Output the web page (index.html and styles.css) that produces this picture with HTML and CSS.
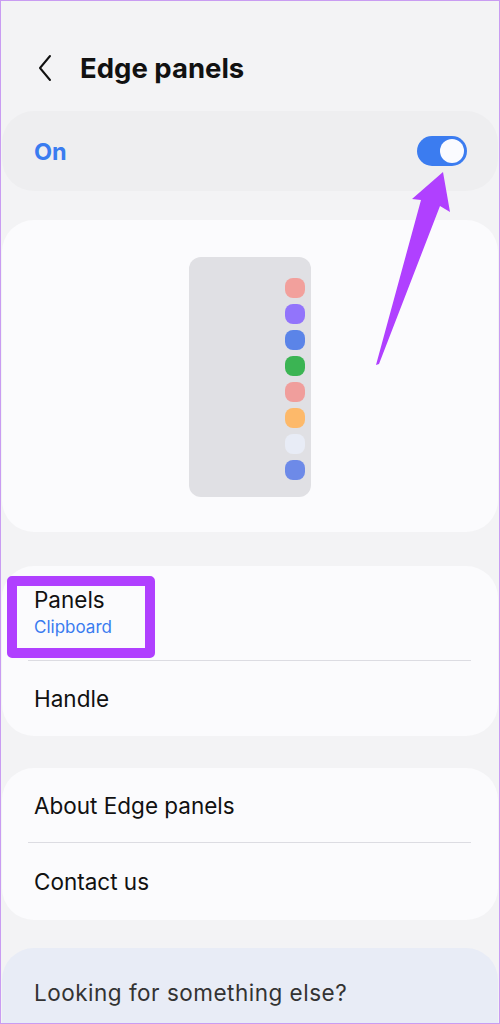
FILE: index.html
```html
<!DOCTYPE html>
<html>
<head>
<meta charset="utf-8">
<link rel="stylesheet" href="styles.css">
</head>
<body>
<div class="page">
  <header class="topbar">
    <svg class="back" width="16" height="28" viewBox="0 0 16 28"><path d="M13 2 L3 14 L13 26" fill="none" stroke="#111" stroke-width="2" stroke-linecap="round" stroke-linejoin="round"/></svg>
    <h1 class="title">Edge panels</h1>
  </header>

  <section class="card card-on">
    <span class="on-label">On</span>
    <span class="toggle"><span class="knob"></span></span>
  </section>

  <section class="card card-preview">
    <div class="phone">
      <div class="edge">
        <span class="app" style="background:#f2a09c"></span>
        <span class="app" style="background:#9274fb"></span>
        <span class="app" style="background:#5b84e8"></span>
        <span class="app" style="background:#3bb453"></span>
        <span class="app" style="background:#f09e9c"></span>
        <span class="app" style="background:#fdb96a"></span>
        <span class="app" style="background:#e8ecf6"></span>
        <span class="app" style="background:#6d8ae8"></span>
      </div>
    </div>
  </section>

  <section class="card card-list">
    <div class="row row-panels">
      <div class="row-title">Panels</div>
      <div class="row-sub">Clipboard</div>
    </div>
    <div class="divider"></div>
    <div class="row row-handle">
      <div class="row-title">Handle</div>
    </div>
  </section>

  <section class="card card-list">
    <div class="row row-about">
      <div class="row-title">About Edge panels</div>
    </div>
    <div class="divider"></div>
    <div class="row row-contact">
      <div class="row-title">Contact us</div>
    </div>
  </section>

  <section class="card card-looking">
    <div class="row-title looking">Looking for something else?</div>
  </section>

  <div class="highlight"></div>
  <svg class="arrow" width="500" height="1024" viewBox="0 0 500 1024">
    <polygon points="443,172 450,212 440,206 379,364 376,365 421,200 412,199" fill="#b040ff"/>
  </svg>
</div>
</body>
</html>
```

FILE: styles.css
```css
* { box-sizing: border-box; }
html, body { margin: 0; padding: 0; }
body {
  width: 500px;
  height: 1024px;
  overflow: hidden;
  font-family: "Inter", "Roboto", "Noto Sans", sans-serif;
  color: #111;
}
.page {
  position: relative;
  width: 500px;
  height: 1024px;
  background: #f3f3f5;
  border: 1px solid #c99cf2;
  padding: 0 1px;
  overflow: hidden;
}
.topbar {
  height: 110px;
  display: flex;
  align-items: center;
  padding-left: 35px;
  padding-top: 24px;
}
.back { display: block; }
.title {
  margin: 0 0 0 27px;
  font-size: 27.5px;
  font-weight: 700;
  letter-spacing: 0;
  color: #111;
}
.card {
  border-radius: 32px;
  background: #fbfbfd;
}
.card-on {
  height: 80px;
  background: #eeeef0;
  display: flex;
  align-items: center;
  justify-content: space-between;
  padding: 0 31px 0 32px;
}
.on-label {
  color: #3a7cf0;
  font-size: 23.5px;
  font-weight: 700;
}
.toggle {
  width: 50px;
  height: 30px;
  border-radius: 15px;
  background: #3b7cf0;
  position: relative;
  display: block;
}
.knob {
  position: absolute;
  right: 3px;
  top: 3px;
  width: 24px;
  height: 24px;
  border-radius: 50%;
  background: #fafbff;
}
.card-preview {
  margin-top: 29px;
  height: 312px;
  display: flex;
  justify-content: center;
  padding-top: 37px;
}
.phone {
  width: 122px;
  height: 240px;
  border-radius: 12px;
  background: #e0e0e4;
  display: flex;
  justify-content: flex-end;
  padding: 21px 6px 0 0;
}
.edge {
  display: flex;
  flex-direction: column;
  gap: 6px;
}
.app {
  display: block;
  width: 20px;
  height: 20px;
  border-radius: 8px;
}
.card-list { margin-top: 34px; }
.card-list + .card-list { margin-top: 32px; }
.row { padding-left: 32px; display: flex; flex-direction: column; justify-content: center; }
.row-title { font-size: 22.5px; color: #111; }
.row-sub { font-size: 17px; color: #3a7cf0; margin-top: 4px; }
.row-panels { height: 94px; padding-bottom: 3px; }
.row-handle { height: 75px; }
.row-about { height: 74px; }
.row-contact { height: 77px; }
.divider {
  height: 1px;
  background: #dcdce2;
  margin: 0 27px 0 26px;
}
.card-looking {
  margin-top: 28px;
  height: 120px;
  background: #e8ecf6;
  padding: 31px 0 0 32px;
}
.looking { color: #333; letter-spacing: 0.5px; }
.highlight {
  position: absolute;
  left: 6px;
  top: 575px;
  width: 148px;
  height: 82px;
  border: 10px solid #b040ff;
  border-radius: 5px;
}
.arrow {
  position: absolute;
  left: -1px;
  top: -1px;
}
```
